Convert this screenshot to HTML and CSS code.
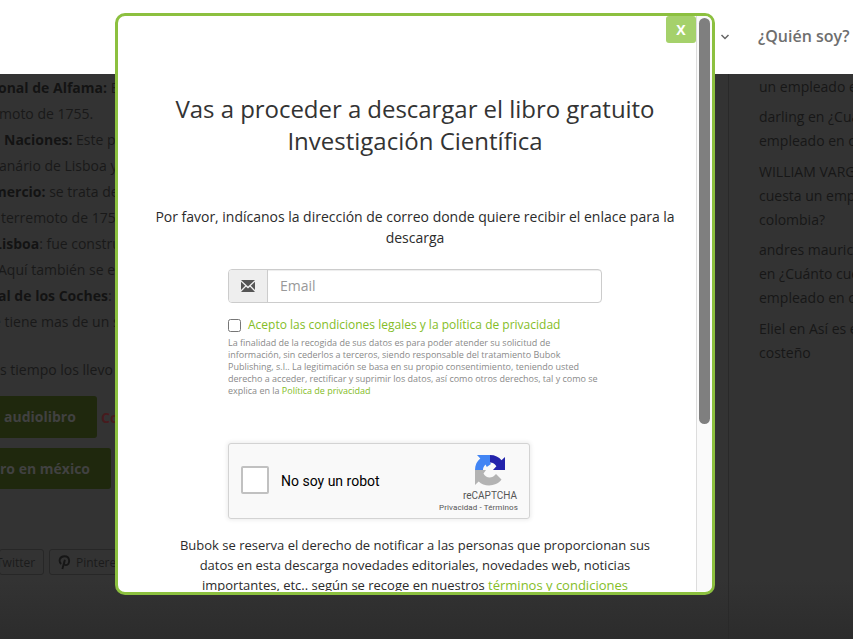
FILE: index.html
```html
<!DOCTYPE html>
<html lang="es">
<head>
<meta charset="utf-8">
<title>Descarga gratuita</title>
<link rel="stylesheet" href="styles.css">
</head>
<body>
<header class="topbar">
  <svg class="chevron" viewBox="0 0 10 6"><path d="M1.5 1 5 4.5 8.5 1"/></svg>
  <span class="nav-item">¿Quién soy?</span>
</header>
<main class="page">
  <article class="post">
    <p class="line out-2"><b>onal de Alfama:</b> Es</p>
    <p class="line out-1">moto de 1755.</p>
    <p class="line in-4"><b>Naciones:</b> Este pa</p>
    <p class="line out-1">anário de Lisboa y</p>
    <p class="line out-7"><b>mercio:</b> se trata de</p>
    <p class="line in-1">terremoto de 1755</p>
    <p class="line out-6"><b>Lisboa</b>: fue constru</p>
    <p class="line out-2">Aquí también se en</p>
    <p class="line out-2"><b>al de los Coches</b>:</p>
    <p class="line out-7">e tiene mas de un s</p>
    <p class="line spaced">s tiempo los llevo</p>
    <div class="buttons"><span class="btn audio">audiolibro</span><span class="promo">Co</span></div>
    <div class="buttons"><span class="btn mexico">ro en méxico</span></div>
    <div class="share">
      <span class="chip twitter">Twitter</span>
      <span class="chip pinterest"><svg viewBox="0 0 14 16"><path d="M3.4 9.6C.6 7.2 1.2 1.4 7 1.3c6.5 0 6.3 9.3 1.6 9.5-1.4 0-2.2-.8-2-2.2L7.4 5M6.9 7 4.7 15"/></svg>Pinterest</span>
    </div>
  </article>
  <aside class="sidebar">
    <p>un empleado en</p>
    <p>darling en ¿Cuánto<br>empleado en co</p>
    <p>WILLIAM VARGAS<br>cuesta un emple<br>colombia?</p>
    <p>andres mauricio<br>en ¿Cuánto cuesta<br>empleado en co</p>
    <p>Eliel en Así es el<br>costeño</p>
  </aside>
</main>
<section class="modal">
  <div class="modal-body">
    <h1>Vas a proceder a descargar el libro gratuito<br><span>Investigación Científica</span></h1>
    <p class="lead">Por favor, indícanos la dirección de correo donde quiere recibir el enlace para la<br>descarga</p>
    <div class="form">
      <div class="email">
        <span class="addon"><svg viewBox="0 0 14 12"><path d="M0 0h14L7 6.6zM0 1.7 4.2 5.7 0 10zM14 1.7 9.8 5.7 14 10zM0 12 5 6.7l2 1.8 2-1.8 5 5.3z"/></svg></span>
        <span class="field">Email</span>
      </div>
      <div class="accept"><span class="check"></span><span>Acepto las condiciones legales y la política de privacidad</span></div>
      <p class="legal">La finalidad de la recogida de sus datos es para poder atender su solicitud de<br>información, sin cederlos a terceros, siendo responsable del tratamiento Bubok<br>Publishing, s.l.. La legitimación se basa en su propio consentimiento, teniendo usted<br>derecho a acceder, rectificar y suprimir los datos, así como otros derechos, tal y como se<br>explica en la <a>Política de privacidad</a></p>
      <div class="captcha">
        <span class="captcha-box"></span>
        <span class="captcha-label">No soy un robot</span>
        <div class="captcha-brand">
          <svg viewBox="0 0 32 32">
            <path class="navy" d="M16 1C21 1 25 3 27.5 6.2L31 3V16H19L22.4 12.3C21 9.8 19 8.5 16 8.5z"/>
            <path class="blue" d="M1 16C1 11 3 7 6.3 4.5L3 1H16V8.5L17 10 12.8 13 11.5 10.5C10 12 9 13.5 9 16z"/>
            <path class="gray" d="M1 16H12L9.5 19.5C12 24.5 18 25.2 22 20L27.5 25.5C22 33 10 33 4.7 27.5L1 31z"/>
          </svg>
          <span class="brand-name">reCAPTCHA</span>
          <span class="brand-links">Privacidad - Términos</span>
        </div>
      </div>
    </div>
    <p class="notice">Bubok se reserva el derecho de notificar a las personas que proporcionan sus<br>datos en esta descarga novedades editoriales, novedades web, noticias<br>importantes, etc.. según se recoge en nuestros <a>términos y condiciones</a></p>
  </div>
  <div class="scroll"><span class="thumb"></span></div>
  <span class="close">X</span>
</section>
</body>
</html>
```
FILE: styles.css
```css
* { box-sizing: border-box; }
body { margin: 0; width: 853px; height: 639px; overflow: hidden; position: relative; font-family: "Open Sans", sans-serif; background: #333; }
p, h1 { margin: 0; font-weight: 400; white-space: nowrap; }
a { color: #84bd27; }
.topbar { height: 74px; background: #fff; display: flex; align-items: center; padding: 0 0 1px 720px; gap: 28px; }
.chevron { width: 10px; height: 6px; fill: none; stroke: #666; stroke-width: 1.5; }
.nav-item { font-size: 16px; font-weight: 600; margin-bottom: 2px; color: #6e6e6e; white-space: nowrap; }
.page { height: 565px; display: flex; background: linear-gradient(#333 0, #333 505px, #2c2c2c 565px); color: #1b1b1b; }
.post { width: 729px; padding-top: 1px; border-right: 1px solid #292929; font-size: 14px; overflow: hidden; }
.line { line-height: 26px; color: #191919; }
.line b { color: #131313; }
.in-4 { padding-left: 4px; }
.in-1 { padding-left: 1px; }
.out-1 { margin-left: -1px; }
.out-2 { margin-left: -2px; }
.out-6 { margin-left: -6px; }
.out-7 { margin-left: -7px; }
.spaced { margin: 22px 0 13px; }
.buttons { display: flex; align-items: center; height: 42px; margin-bottom: 10px; font-weight: 700; }
.btn { height: 42px; line-height: 42px; background: #1f280d; color: #414141; border-radius: 0 3px 3px 0; white-space: nowrap; }
.audio { width: 97px; padding-left: 4px; }
.mexico { width: 111px; height: 41px; margin-bottom: 1px; }
.promo { margin-left: 4px; color: #471b1e; }
.share { display: flex; gap: 5px; margin-top: 59px; font-size: 12px; }
.chip { height: 26px; line-height: 25px; border: 1px solid #272727; border-radius: 3px; display: flex; align-items: center; color: #1b1b1b; }
.twitter { width: 45px; margin-left: -1px; text-indent: -4px; }
.pinterest { width: 90px; padding-left: 8px; gap: 5px; }
.pinterest svg { width: 13px; height: 15px; fill: none; stroke: #161616; stroke-width: 2; }
.sidebar { padding: 1px 0 0 30px; width: 124px; overflow: hidden; font-size: 14px; line-height: 24px; color: #171717; }
.sidebar p { margin-bottom: 6.4px; }
.modal { position: absolute; left: 115px; top: 13px; width: 600px; height: 582px; border: 3px solid #8cc03f; border-radius: 10px; background: #fff; display: flex; overflow: hidden; color: #2b2b2b; }
.modal-body { width: 594px; height: 575px; flex-shrink: 0; overflow: hidden; }
h1 { margin-top: 77px; font-size: 24px; line-height: 32px; text-align: center; color: #333; letter-spacing: -.04px; }
h1 span { letter-spacing: 0; }
.lead { margin-top: 49px; font-size: 14px; line-height: 21px; text-align: center; letter-spacing: -.015px; }
.form { width: 374px; margin: 20.5px 0 0 110px; }
.email { height: 34px; display: flex; border: 1px solid #ccc; border-radius: 4px; overflow: hidden; }
.addon { width: 39px; background: #eee; border-right: 1px solid #ccc; display: flex; align-items: center; justify-content: center; }
.addon svg { width: 14px; height: 12px; fill: #555; }
.field { flex: 1; padding-left: 12px; line-height: 32px; font-size: 14px; color: #999; box-shadow: inset 0 1px 1px rgba(0,0,0,.075); }
.accept { display: flex; align-items: center; height: 18px; margin-top: 13px; gap: 7px; font-size: 12px; color: #84bd27; white-space: nowrap; }
.check { width: 13px; height: 13px; border: 1px solid #767676; border-radius: 2.5px; margin-top: 1px; }
.legal { margin-top: 3px; font-size: 9px; line-height: 12px; color: #8a8a8a; letter-spacing: -.01px; }
.captcha { width: 302px; height: 76px; margin-top: 46px; border: 1px solid #d3d3d3; border-radius: 3px; background: #f9f9f9; box-shadow: 0 0 4px 1px rgba(0,0,0,.08); display: flex; align-items: center; font-family: Roboto, sans-serif; color: #000; }
.captcha-box { width: 28px; height: 28px; margin: -2px 12px 0 12px; border: 2px solid #c1c1c1; border-radius: 2px; background: #fff; }
.captcha-label { width: 150px; font-size: 14px; }
.captcha-brand { width: 90px; height: 66px; margin-left: 5px; display: flex; flex-direction: column; align-items: center; color: #555; white-space: nowrap; }
.captcha-brand svg { width: 32px; height: 32px; margin: 6px 0 0 17px; }
.brand-name { font-size: 10px; line-height: 12px; margin: 4px 0 0 18px; }
.brand-links { font-size: 8px; line-height: 11px; margin-left: -5px; letter-spacing: .1px; }
.navy { fill: #2323ab; }
.blue { fill: #4285f4; }
.gray { fill: #b3b3b3; }
.notice { margin-top: 16px; font-size: 13px; line-height: 20px; text-align: center; }
.scroll { position: absolute; right: 0; top: 0; width: 16px; height: 575px; border-left: 1px solid #ddd; background: #fafafa; padding: 2px 0 0 2px; }
.thumb { display: block; width: 11px; height: 406px; border-radius: 6px; background: #7f7f7f; }
.close { position: absolute; right: 16px; top: 0; width: 30px; height: 27px; line-height: 28px; border-radius: 3px; background: #a5d16b; color: #fff; font-size: 14px; font-weight: 700; text-align: center; }
```
